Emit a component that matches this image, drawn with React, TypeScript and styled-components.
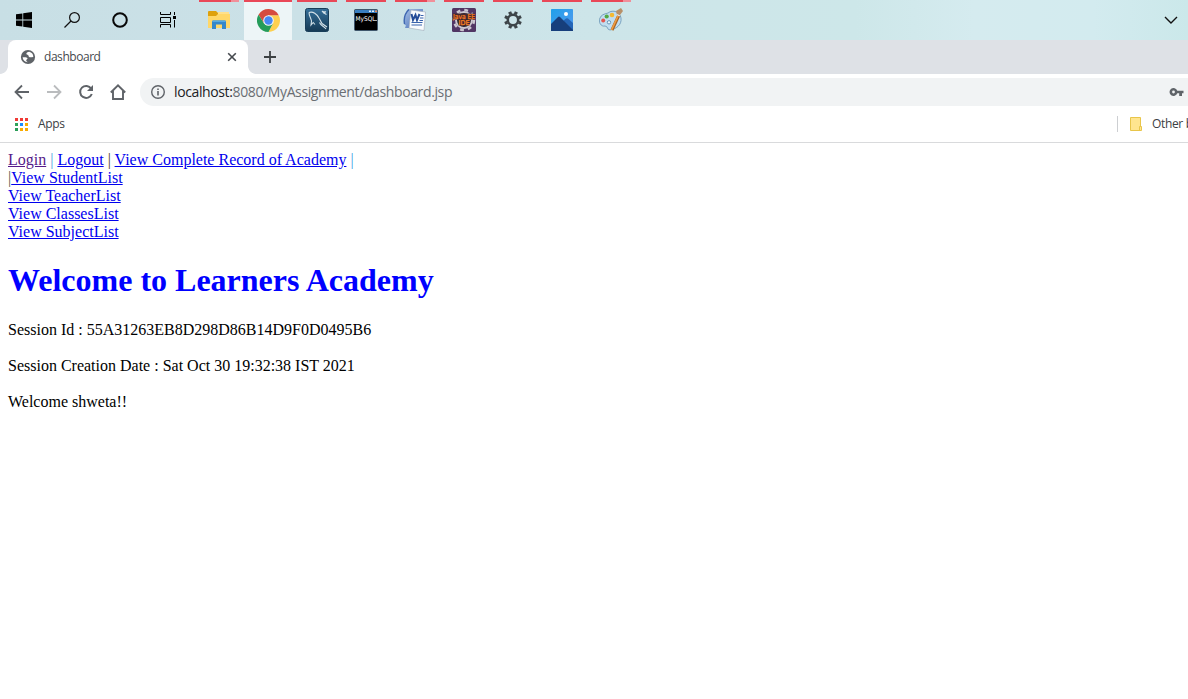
import React from "react";
import styled, { createGlobalStyle } from "styled-components";

const GlobalStyle = createGlobalStyle`
  * { box-sizing: border-box; }
  html, body { margin: 0; padding: 0; background: #fff; overflow: hidden; }
  svg { display: block; flex: none; }
`;

const Screen = styled.div`
  width: 1188px;
  height: 699px;
  display: flex;
  flex-direction: column;
  overflow: hidden;
  background: #fff;
  font-family: "Open Sans", "Noto Sans", sans-serif;
`;

const Taskbar = styled.div`
  height: 40px;
  flex: none;
  display: flex;
  background: linear-gradient(90deg, #c8dfe5 0%, #cbe1e7 25%, #cde5e9 50%, #cde7e9 72%, #d5ebef 82%, #d3ebef 92%, #cbe8ea 100%);
`;

const SystemButton = styled.div`
  width: 48px;
  height: 40px;
  display: flex;
  align-items: center;
  justify-content: center;
`;

const Apps = styled.div`
  display: flex;
  gap: 1px;
  margin-left: 3px;
`;

const AppButton = styled.div<{ $active?: boolean }>`
  width: 48px;
  height: 40px;
  display: flex;
  flex-direction: column;
  align-items: center;
  margin-right: ${(p) => (p.$active ? 0 : 0)}px;
  background: ${(p) => (p.$active ? "#edf5f7" : "transparent")};
`;

const Indicator = styled.div<{ $active?: boolean; $stacked?: boolean }>`
  width: ${(p) => (p.$active ? 48 : 40)}px;
  height: 2px;
  background: ${(p) =>
    p.$stacked ? "linear-gradient(90deg, #e94858 32px, #f18f9a 32px)" : "#e94858"};
`;

const AppIcon = styled.div`
  flex: 1;
  display: flex;
  align-items: center;
  padding-bottom: 2px;
`;

const Overflow = styled.div`
  margin-left: auto;
  width: 34px;
  display: flex;
  align-items: center;
  justify-content: center;
`;

const TabStrip = styled.div`
  height: 34px;
  flex: none;
  display: flex;
  background: #dee1e6;
`;

const Flare = styled.div<{ $side: "left" | "right" }>`
  width: 8px;
  height: 8px;
  align-self: flex-end;
  background: radial-gradient(circle at ${(p) => (p.$side === "left" ? "0 0" : "100% 0")}, #dee1e6 7.5px, #fff 8.2px);
`;

const Tab = styled.div`
  width: 240px;
  height: 34px;
  display: flex;
  align-items: center;
  padding: 0 10px 0 12px;
  border-radius: 8px 8px 0 0;
  background: #fff;
`;

const TabTitle = styled.span`
  flex: 1;
  margin-left: 8px;
  font-size: 12px;
  line-height: 16px;
  letter-spacing: -0.45px;
  color: #45494d;
`;

const NewTab = styled.div`
  width: 28px;
  height: 34px;
  display: flex;
  align-items: center;
  justify-content: center;
`;

const Toolbar = styled.div`
  height: 36px;
  flex: none;
  display: flex;
  align-items: center;
  padding-left: 12px;
`;

const NavButtons = styled.div`
  display: flex;
  gap: 12px;
  width: 128px;
`;

const AddressBar = styled.div`
  flex: 1;
  height: 28px;
  display: flex;
  align-items: center;
  padding: 0 4px 0 10px;
  border-radius: 14px 0 0 14px;
  background: #f1f3f4;
`;

const Url = styled.span`
  flex: 1;
  margin-left: 8px;
  font-size: 14px;
  line-height: 20px;
  letter-spacing: -0.38px;
  color: #6a6e73;
`;

const Host = styled.span`
  color: #202124;
`;

const Bookmarks = styled.div`
  height: 33px;
  flex: none;
  display: flex;
  align-items: center;
  padding: 0 0 4px 15px;
  border-bottom: 1px solid #d9dadc;
  overflow: hidden;
`;

const AppsGrid = styled.div`
  display: grid;
  grid-template-columns: repeat(3, 3px);
  gap: 2px;
`;

const Dot = styled.i<{ $color: string }>`
  width: 3px;
  height: 3px;
  background: ${(p) => p.$color};
`;

const BookmarkLabel = styled.span`
  margin-left: 10px;
  font-size: 12px;
  line-height: 16px;
  letter-spacing: -0.35px;
  white-space: nowrap;
  color: #3c4043;
`;

const OtherBookmarks = styled.div`
  margin-left: auto;
  width: 71px;
  flex: none;
  display: flex;
  align-items: center;
  overflow: hidden;
`;

const Divider = styled.div`
  width: 1px;
  height: 16px;
  margin-right: 12px;
  flex: none;
  background: #cdcfd2;
`;

const Page = styled.main`
  padding: 8px;
  font-family: "Liberation Serif", "Times New Roman", serif;
  font-size: 16px;
  line-height: 18px;
  color: #000;
`;

const Line = styled.div`
  height: 18px;
  white-space: pre;
`;

const Link = styled.a<{ $visited?: boolean }>`
  color: ${(p) => (p.$visited ? "#551a8b" : "#0000ee")};
  text-decoration: underline;
`;

const Bar = styled.span<{ $color: string }>`
  color: ${(p) => p.$color};
`;

const Heading = styled.h1`
  margin: 0.67em 0;
  font-size: 32px;
  line-height: 37px;
  font-weight: bold;
  color: #0000ff;
  white-space: nowrap;
`;

const Info = styled.p`
  margin: 0 0 18px;
`;

const StartIcon = () => (
  <svg width="16" height="16" viewBox="0 0 16 16">
    <path d="M0 2.3 6.4 1.4V7.5H0ZM7.2 1.3 16 0V7.5H7.2ZM0 8.4H6.4V14.6L0 13.7ZM7.2 8.4H16V16L7.2 14.8Z" />
  </svg>
);

const SearchIcon = () => (
  <svg width="16" height="16" viewBox="0 0 16 16" fill="none" stroke="#111" strokeWidth="1.2">
    <circle cx="10.5" cy="5.5" r="4.9" />
    <path d="M7 9 .5 15.5" />
  </svg>
);

const CortanaIcon = () => (
  <svg width="16" height="16" viewBox="0 0 16 16" fill="none" stroke="#080808" strokeWidth="2">
    <circle cx="8" cy="8" r="6.8" />
  </svg>
);

const TaskViewIcon = () => (
  <svg width="16" height="16" viewBox="0 0 16 16" fill="none" stroke="#000">
    <path d="M.5 0V2.5H10.5V0M.5 15.5V12.5H10.5V15.5M.5 5.5H10.5V10.5H.5ZM14.5 0V3M14.5 8V15.5" />
    <path d="M13 4h3v3h-3z" fill="#000" stroke="none" />
  </svg>
);

const FolderIcon = () => (
  <svg width="22" height="20" viewBox="0 0 22 20">
    <path d="M0 2Q0 1 1 1H8L10 3H20V7H0Z" fill="#dea10c" />
    <path d="M10 2H21V5H10Z" fill="#ffe08a" />
    <path d="M0 6H8L10 4H22V18H0Z" fill="#ffd768" />
    <path d="M4 19V11.5Q4 10.5 5 10.5H17Q18 10.5 18 11.5V19H14V14.5H8V19Z" fill="#3487ca" />
    <path d="M5 10.5H17L18 12H4Z" fill="#55aae2" />
  </svg>
);

const ChromeIcon = () => (
  <svg width="23" height="23" viewBox="0 0 48 48">
    <path d="M24 13H45.3A24 24 0 0 1 24 48L33.5 29.5Z" fill="#fdd04f" />
    <path d="M3.2 12A24 24 0 0 1 45.3 13H24L14.5 29.5Z" fill="#d64c3f" />
    <path d="M3.2 12 14.5 29.5H33.5L24 48A24 24 0 0 1 3.2 12Z" fill="#259c5a" />
    <circle cx="24" cy="24" r="11" fill="#f4f4f4" />
    <circle cx="24" cy="24" r="8.8" fill="#4688f4" />
  </svg>
);

const WorkbenchIcon = () => (
  <svg width="24" height="24" viewBox="0 0 24 24">
    <defs>
      <linearGradient id="wb" x1="0" y1="0" x2="0" y2="1">
        <stop offset="0" stopColor="#356f99" />
        <stop offset="1" stopColor="#153954" />
      </linearGradient>
    </defs>
    <rect x=".5" y=".5" width="23" height="23" rx="2" fill="url(#wb)" stroke="#183e59" />
    <path d="M4 4.5C8 3 12 6 14 10L17 15.5 22 19M4 4.5C4 8 6 10 6.5 13L6 17 8.2 14.5 10 16.5M14.5 14.5C16 18 19 18 21 21M17 3 19 5 21.5 6.5M19 3V5L21 3.5" fill="none" stroke="#d4e2e9" strokeWidth="1.1" />
  </svg>
);

const TinyText = styled.text`
  font-family: "DejaVu Sans", sans-serif;
`;

const MysqlIcon = () => (
  <svg width="24" height="22" viewBox="0 0 24 22">
    <rect x=".5" y=".5" width="23" height="21" rx="1" fill="#000" stroke="#3f576c" />
    <path d="M1 1H23V4H1Z" fill="#397ec0" />
    <path d="M15 1.5h2v1.5h-2zM18 1.5h2v1.5h-2z" fill="#e4edf5" />
    <path d="M21 1.5h2v1.5h-2z" fill="#e98b55" />
    <TinyText x="1.5" y="12" fontSize="6.4" fill="#fff" textLength="20" lengthAdjust="spacingAndGlyphs">MySQL</TinyText>
    <path d="M20 11.5H23" stroke="#bbb" strokeWidth=".9" />
  </svg>
);

const WordIcon = () => (
  <svg width="24" height="24" viewBox="0 0 24 24">
    <defs>
      <linearGradient id="word" x1="0" y1="0" x2="1" y2="1">
        <stop offset="0" stopColor="#a9c1e6" />
        <stop offset="1" stopColor="#3e68b4" />
      </linearGradient>
    </defs>
    <path d="M5 1H20V20H2L3 17Q1 18 1 13Q1 5 5 1Z" fill="url(#word)" />
    <path d="M1.5 16Q0 7 6 1.5" fill="none" stroke="#3f67b0" strokeWidth="1.4" />
    <path d="M8 2 22.5 4 21 22.5 6 20Z" fill="#f9fbfe" stroke="#9faab8" strokeWidth=".6" />
    <path d="M8.5 6 10 12 12.5 7 14 12 16.5 6" fill="none" stroke="#244b98" strokeWidth="2" />
    <path d="M17.5 7.5H20.5M17 10H20.5M16.5 12.5H20M8.5 14.5H19.5M8.5 17H19" stroke="#3963ad" strokeWidth="1.2" />
  </svg>
);

const JavaIcon = () => (
  <svg width="24" height="24" viewBox="0 0 24 24">
    <rect width="24" height="24" rx="1.5" fill="#513664" />
    <circle cx="12" cy="12" r="8" fill="#29242f" stroke="#cbc6cf" strokeWidth="2" />
    <circle cx="12" cy="12" r="10" fill="none" stroke="#cbc6cf" strokeWidth="2.5" strokeDasharray="3.8 4.05" />
    <path d="M1 5.5H23V11.5H1ZM6.5 12H17.5V17.5H6.5Z" fill="#452a30" />
    <TinyText x="1" y="11" fontSize="6.8" fill="#f47a20" stroke="#f47a20" strokeWidth=".3" textLength="22" lengthAdjust="spacingAndGlyphs">Java EE</TinyText>
    <TinyText x="6.5" y="17" fontSize="6.5" fill="#f78120" stroke="#f78120" strokeWidth=".3" textLength="11" lengthAdjust="spacingAndGlyphs">IDE</TinyText>
  </svg>
);

const GearIcon = () => (
  <svg width="18" height="18" viewBox="0 0 18 18" fill="none" stroke="#3d4448">
    <circle cx="9" cy="9" r="5.2" strokeWidth="2.5" />
    <g strokeWidth="3.2">
      {[22.5, 67.5, 112.5, 157.5, 202.5, 247.5, 292.5, 337.5].map((a) => (
        <path key={a} d="M9 .2V3" transform={`rotate(${a} 9 9)`} />
      ))}
    </g>
  </svg>
);

const PhotosIcon = () => (
  <svg width="22" height="22" viewBox="0 0 22 22">
    <defs>
      <linearGradient id="sky" x1="0" y1="0" x2="1" y2="1">
        <stop offset="0" stopColor="#1fa0ea" />
        <stop offset="1" stopColor="#5599ee" />
      </linearGradient>
    </defs>
    <rect width="22" height="22" rx=".7" fill="url(#sky)" />
    <path d="M12 12 15 9.5Q16 9 17 9.5L22 14V22H14Z" fill="#2466b8" />
    <path d="M0 15 7 8Q8 7 9 8L22 21V22H0Z" fill="#173f7c" />
    <circle cx="15" cy="5" r="2" fill="#fff" />
  </svg>
);

const PaintIcon = () => (
  <svg width="24" height="24" viewBox="0 0 24 24">
    <path d="M9 5C14 1 21 4 22 10C23 17 17 21 11 22C8 22 9 18 6 18C2 19-1 14 1 10C2 7 5 6 9 5Z" fill="#c1def0" stroke="#6692b3" strokeWidth=".8" />
    <circle cx="4.2" cy="12.5" r="2" fill="#e45750" />
    <circle cx="7.7" cy="8.5" r="2.1" fill="#51a944" />
    <circle cx="13" cy="7" r="2.3" fill="#f4b932" />
    <circle cx="10" cy="14.3" r="1.7" fill="#e9f6fb" stroke="#4d83a9" strokeWidth=".8" />
    <path d="M13 22 20 7" stroke="#a86220" strokeWidth="3" />
    <path d="M12.5 22 19.5 7" stroke="#ef9d43" strokeWidth="1.7" />
    <path d="M18 7 17 3 22 0 24 3 21 7Z" fill="#b89068" />
    <path d="M18 6.5 21 8" stroke="#e2e6e9" strokeWidth="1.3" />
  </svg>
);

const GlobeIcon = () => (
  <svg width="16" height="16" viewBox="0 0 16 16">
    <circle cx="8" cy="8" r="7.1" fill="#5f6368" />
    <path d="M2.6 8.3C4.8 8 7 8.2 7.5 9.3C7.8 10.3 6.2 10.4 6.2 11.5C6.2 12.4 7.4 12.4 7.6 13.3C5 13.2 2.8 11.2 2.6 8.3ZM9.2 2.8C7.6 3 6 3.9 6.4 5C6.8 6 8.3 5.4 8.5 6.8C8.7 8.2 10 8.5 11.6 8.2L13.3 7.9C13.3 5.5 11.8 3.3 9.2 2.8Z" fill="#fff" />
  </svg>
);

const CloseIcon = () => (
  <svg width="12" height="12" viewBox="0 0 12 12" fill="none" stroke="#45494e" strokeWidth="1.6">
    <path d="M2.2 2.2 9.8 9.8M9.8 2.2 2.2 9.8" />
  </svg>
);

const PlusIcon = () => (
  <svg width="14" height="14" viewBox="0 0 14 14" fill="none" stroke="#3c4043" strokeWidth="1.8">
    <path d="M7 1V13M1 7H13" />
  </svg>
);

const ArrowIcon = ({ forward }: { forward?: boolean }) => (
  <svg width="20" height="20" viewBox="0 0 20 20" fill="none" stroke={forward ? "#babcbe" : "#5f6368"} strokeWidth="1.8">
    <path d={forward ? "M3 10H16M10 3.5 16.5 10 10 16.5" : "M17 10H4M10 3.5 3.5 10 10 16.5"} />
  </svg>
);

const ReloadIcon = () => (
  <svg width="20" height="20" viewBox="0 0 20 20">
    <path d="M15.2 6.6A6 6 0 1 0 15.8 12" fill="none" stroke="#5f6368" strokeWidth="2" />
    <path d="M17 3V9H11Z" fill="#5f6368" />
  </svg>
);

const HomeIcon = () => (
  <svg width="20" height="20" viewBox="0 0 20 20" fill="none" stroke="#5f6368" strokeWidth="1.9">
    <path d="M2.8 10.5 10 3.3 17.2 10.5M5 9V17H15V9" />
  </svg>
);

const InfoIcon = () => (
  <svg width="16" height="16" viewBox="0 0 16 16">
    <circle cx="8" cy="8" r="6.3" fill="none" stroke="#5f6368" strokeWidth="1.4" />
    <path d="M7.2 7h1.6v4.6H7.2zM7.2 4.4h1.6V6H7.2z" fill="#5f6368" />
  </svg>
);

const KeyIcon = () => (
  <svg width="15" height="10" viewBox="0 0 15 10">
    <path d="M8.3 3.7A4 4 0 1 0 8.3 6.3H10.2V9H13V6.3H14.5V3.7Z" fill="#5f6368" />
    <circle cx="4.5" cy="5" r="1.4" fill="#f1f3f4" />
  </svg>
);

const BookmarkFolder = () => (
  <svg width="12" height="14" viewBox="0 0 12 14">
    <path d="M.5.5H10.5V9.5H11.5V13.5H.5Z" fill="#ffe58f" stroke="#e8c54a" />
    <path d="M9.5 13V9.5H11" fill="none" stroke="#e8c54a" />
  </svg>
);

const ChevronIcon = () => (
  <svg width="14" height="8" viewBox="0 0 14 8" fill="none" stroke="#111" strokeWidth="1.4">
    <path d="M1 1 7 7 13 1" />
  </svg>
);

const apps = [
  { name: "explorer", icon: <FolderIcon />, stacked: true },
  { name: "chrome", icon: <ChromeIcon />, active: true },
  { name: "workbench", icon: <WorkbenchIcon /> },
  { name: "mysql", icon: <MysqlIcon /> },
  { name: "word", icon: <WordIcon />, stacked: true },
  { name: "eclipse", icon: <JavaIcon /> },
  { name: "settings", icon: <GearIcon /> },
  { name: "photos", icon: <PhotosIcon /> },
  { name: "paint", icon: <PaintIcon />, stacked: true },
];

const dots = ["#f03a35", "#f03a35", "#f03a35", "#2fa35a", "#1a8cff", "#f9ab00", "#2a9d58", "#f9ab00", "#f9ab00"];

export default function App() {
  return (
    <Screen>
      <GlobalStyle />
      <Taskbar>
        <SystemButton><StartIcon /></SystemButton>
        <SystemButton><SearchIcon /></SystemButton>
        <SystemButton><CortanaIcon /></SystemButton>
        <SystemButton><TaskViewIcon /></SystemButton>
        <Apps>
          {apps.map((a) => (
            <AppButton key={a.name} $active={a.active}>
              <Indicator $active={a.active} $stacked={a.stacked} />
              <AppIcon>{a.icon}</AppIcon>
            </AppButton>
          ))}
        </Apps>
        <Overflow><ChevronIcon /></Overflow>
      </Taskbar>
      <TabStrip>
        <Flare $side="left" />
        <Tab>
          <GlobeIcon />
          <TabTitle>dashboard</TabTitle>
          <CloseIcon />
        </Tab>
        <Flare $side="right" />
        <NewTab><PlusIcon /></NewTab>
      </TabStrip>
      <Toolbar>
        <NavButtons>
          <ArrowIcon />
          <ArrowIcon forward />
          <ReloadIcon />
          <HomeIcon />
        </NavButtons>
        <AddressBar>
          <InfoIcon />
          <Url><Host>localhost:</Host>8080/MyAssignment/dashboard.jsp</Url>
          <KeyIcon />
        </AddressBar>
      </Toolbar>
      <Bookmarks>
        <AppsGrid>{dots.map((c, i) => <Dot key={i} $color={c} />)}</AppsGrid>
        <BookmarkLabel>Apps</BookmarkLabel>
        <OtherBookmarks>
          <Divider />
          <BookmarkFolder />
          <BookmarkLabel>Other bookmarks</BookmarkLabel>
        </OtherBookmarks>
      </Bookmarks>
      <Page>
        <Line>
          <Link $visited>Login</Link> <Bar $color="#4aa6dd">|</Bar> <Link>Logout</Link> <Bar $color="#54401c">|</Bar>{" "}
          <Link>View Complete Record of Academy</Link> <Bar $color="#3fa0e4">|</Bar>
        </Line>
        <Line><Bar $color="#50604a">|</Bar><Link>View StudentList</Link></Line>
        <Line><Link>View TeacherList</Link></Line>
        <Line><Link>View ClassesList</Link></Line>
        <Line><Link>View SubjectList</Link></Line>
        <Heading>Welcome to Learners Academy</Heading>
        <Info>Session Id : 55A31263EB8D298D86B14D9F0D0495B6</Info>
        <Info>Session Creation Date : Sat Oct 30 19:32:38 IST 2021</Info>
        <Info>Welcome shweta!!</Info>
      </Page>
    </Screen>
  );
}
